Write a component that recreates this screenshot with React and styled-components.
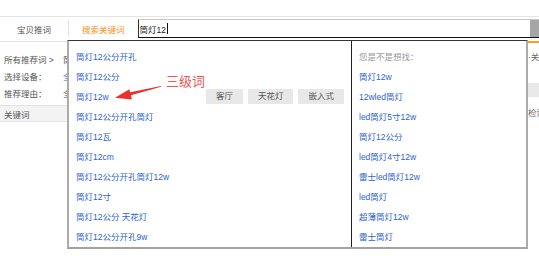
import React from "react";
import styled, { createGlobalStyle } from "styled-components";

const GlobalStyle = createGlobalStyle`
  body {
    margin: 0;
    background: #fff;
    font-family: "Liberation Sans", "Noto Sans CJK SC", sans-serif;
  }
`;

const Page = styled.div`
  position: relative;
  width: 539px;
  height: 274px;
  overflow: hidden;
  padding-top: 16px;
  box-sizing: border-box;
  font-size: 8.5px;
  color: #555;
`;

const TopBar = styled.div`
  display: flex;
  align-items: center;
  height: 23px;
  border-top: 1px solid #e4e4e4;
`;

const Tab = styled.div`
  padding: 0 17px;
  color: ${(p) => (p.active ? "#f7901e" : "#555")};
  white-space: nowrap;
`;

const Separator = styled.div`
  width: 1px;
  height: 16px;
  background: #e2e2e2;
  margin-right: -4px;
`;

const SearchBox = styled.div`
  flex: 1;
  display: flex;
  align-items: center;
  height: 17px;
  margin-left: -4px;
  border-left: 1px solid #333;
  border-top: 1px solid #c8c8c8;
  border-bottom: 1px solid #111;
  color: #222;
`;

const SearchText = styled.span`
  padding-left: 1px;
`;

const Caret = styled.span`
  width: 1px;
  height: 11px;
  background: #111;
  margin-left: 1px;
`;

const SearchButton = styled.div`
  margin-left: auto;
  width: 9px;
  align-self: stretch;
  background: #a6a6a6;
`;

const Main = styled.div`
  display: flex;
  margin-top: 1px;
`;

const LeftPanel = styled.div`
  flex: 1;
  border-top: 1px solid #e4e4e4;
  padding-top: 8px;
`;

const FilterRow = styled.div`
  display: flex;
  align-items: center;
  height: 17px;
  padding-left: 4px;
  color: #555;
`;

const FilterLabel = styled.span`
  width: 59px;
  white-space: nowrap;
`;

const FilterValue = styled.span`
  color: ${(p) => (p.selected ? "#2e63d0" : "#555")};
`;

const TableHead = styled.div`
  display: flex;
  align-items: center;
  height: 15px;
  margin-top: 4px;
  padding-left: 4px;
  background: #f3f3f3;
  border-top: 1px solid #e2e2e2;
  border-bottom: 1px solid #e6e6e6;
  color: #555;
`;

const RightPanel = styled.div`
  width: 11px;
  border-left: 1px solid #ddd;
  border-top: 2px solid #f7a11e;
  white-space: nowrap;
  overflow: hidden;
`;

const SideText = styled.div`
  height: 20px;
  line-height: 20px;
  margin-top: ${(p) => p.top || 0}px;
  color: #666;
`;

const SideStripe = styled.div`
  height: 14px;
  margin-top: 16px;
  background: #e9e9e9;
`;

const Dropdown = styled.div`
  position: absolute;
  left: 67px;
  top: 40px;
  width: 461px;
  height: 209px;
  box-sizing: border-box;
  display: flex;
  background: #fff;
  border-top: 1px solid #333;
  border-left: 2px solid #ababab;
  border-right: 2px solid #ababab;
  border-bottom: 2px solid #a2a2a2;
`;

const Column = styled.div`
  width: ${(p) => p.width}px;
  padding: 5px 7px 0;
  box-sizing: border-box;
  ${(p) => p.divided && "border-left: 1px solid #222;"}
`;

const Item = styled.div`
  display: flex;
  align-items: center;
  height: 20px;
  color: ${(p) => (p.muted ? "#999" : "#2e63d0")};
  white-space: nowrap;
`;

const Tags = styled.div`
  display: flex;
  gap: 5px;
  margin-left: auto;
`;

const Tag = styled.span`
  height: 15px;
  line-height: 15px;
  padding: 0 10px;
  background: #e8e8e8;
  border-radius: 1px;
  color: #555;
`;

const Callout = styled.div`
  position: absolute;
  left: 166px;
  top: 74px;
  font-size: 13px;
  line-height: 14px;
  color: #f25353;
  font-family: "Noto Sans CJK SC", sans-serif;
`;

const ArrowSvg = styled.svg`
  position: absolute;
  left: 112px;
  top: 83px;
`;

const leftItems = [
  "筒灯12公分开孔",
  "筒灯12公分",
  "筒灯12w",
  "筒灯12公分开孔筒灯",
  "筒灯12瓦",
  "筒灯12cm",
  "筒灯12公分开孔筒灯12w",
  "筒灯12寸",
  "筒灯12公分 天花灯",
  "筒灯12公分开孔9w",
];

const rightItems = [
  "筒灯12w",
  "12wled筒灯",
  "led筒灯5寸12w",
  "筒灯12公分",
  "led筒灯4寸12w",
  "雷士led筒灯12w",
  "led筒灯",
  "超薄筒灯12w",
  "雷士筒灯",
];

const tags = ["客厅", "天花灯", "嵌入式"];

export default function App() {
  return (
    <>
      <GlobalStyle />
      <Page>
        <TopBar>
          <Tab>宝贝推词</Tab>
          <Separator />
          <Tab active>搜索关键词</Tab>
          <SearchBox>
            <SearchText>筒灯12</SearchText>
            <Caret />
            <SearchButton />
          </SearchBox>
        </TopBar>

        <Main>
          <LeftPanel>
            <FilterRow>
              <FilterLabel>所有推荐词 &gt;</FilterLabel>
              <FilterValue>筒灯12</FilterValue>
            </FilterRow>
            <FilterRow>
              <FilterLabel>选择设备：</FilterLabel>
              <FilterValue selected>全部</FilterValue>
            </FilterRow>
            <FilterRow>
              <FilterLabel>推荐理由：</FilterLabel>
              <FilterValue>全部</FilterValue>
            </FilterRow>
            <TableHead>关键词</TableHead>
          </LeftPanel>
          <RightPanel>
            <SideText top={4}>·关注</SideText>
            <SideStripe />
            <SideText top={6}>检索</SideText>
          </RightPanel>
        </Main>

        <Dropdown>
          <Column width={282}>
            {leftItems.map((text, i) => (
              <Item key={text}>
                {text}
                {i === 2 && (
                  <Tags>
                    {tags.map((t) => (
                      <Tag key={t}>{t}</Tag>
                    ))}
                  </Tags>
                )}
              </Item>
            ))}
          </Column>
          <Column width={175} divided>
            <Item muted>您是不是想找：</Item>
            {rightItems.map((text) => (
              <Item key={text}>{text}</Item>
            ))}
          </Column>
        </Dropdown>

        <Callout>三级词</Callout>
        <ArrowSvg width="52" height="20" viewBox="112 83 52 20">
          <polygon
            points="115,97.8 129.3,89.2 130.1,92.3 160.9,85.9 161.1,86.8 130.9,95.3 131.9,99.6"
            fill="#e8312f"
          />
        </ArrowSvg>
      </Page>
    </>
  );
}
